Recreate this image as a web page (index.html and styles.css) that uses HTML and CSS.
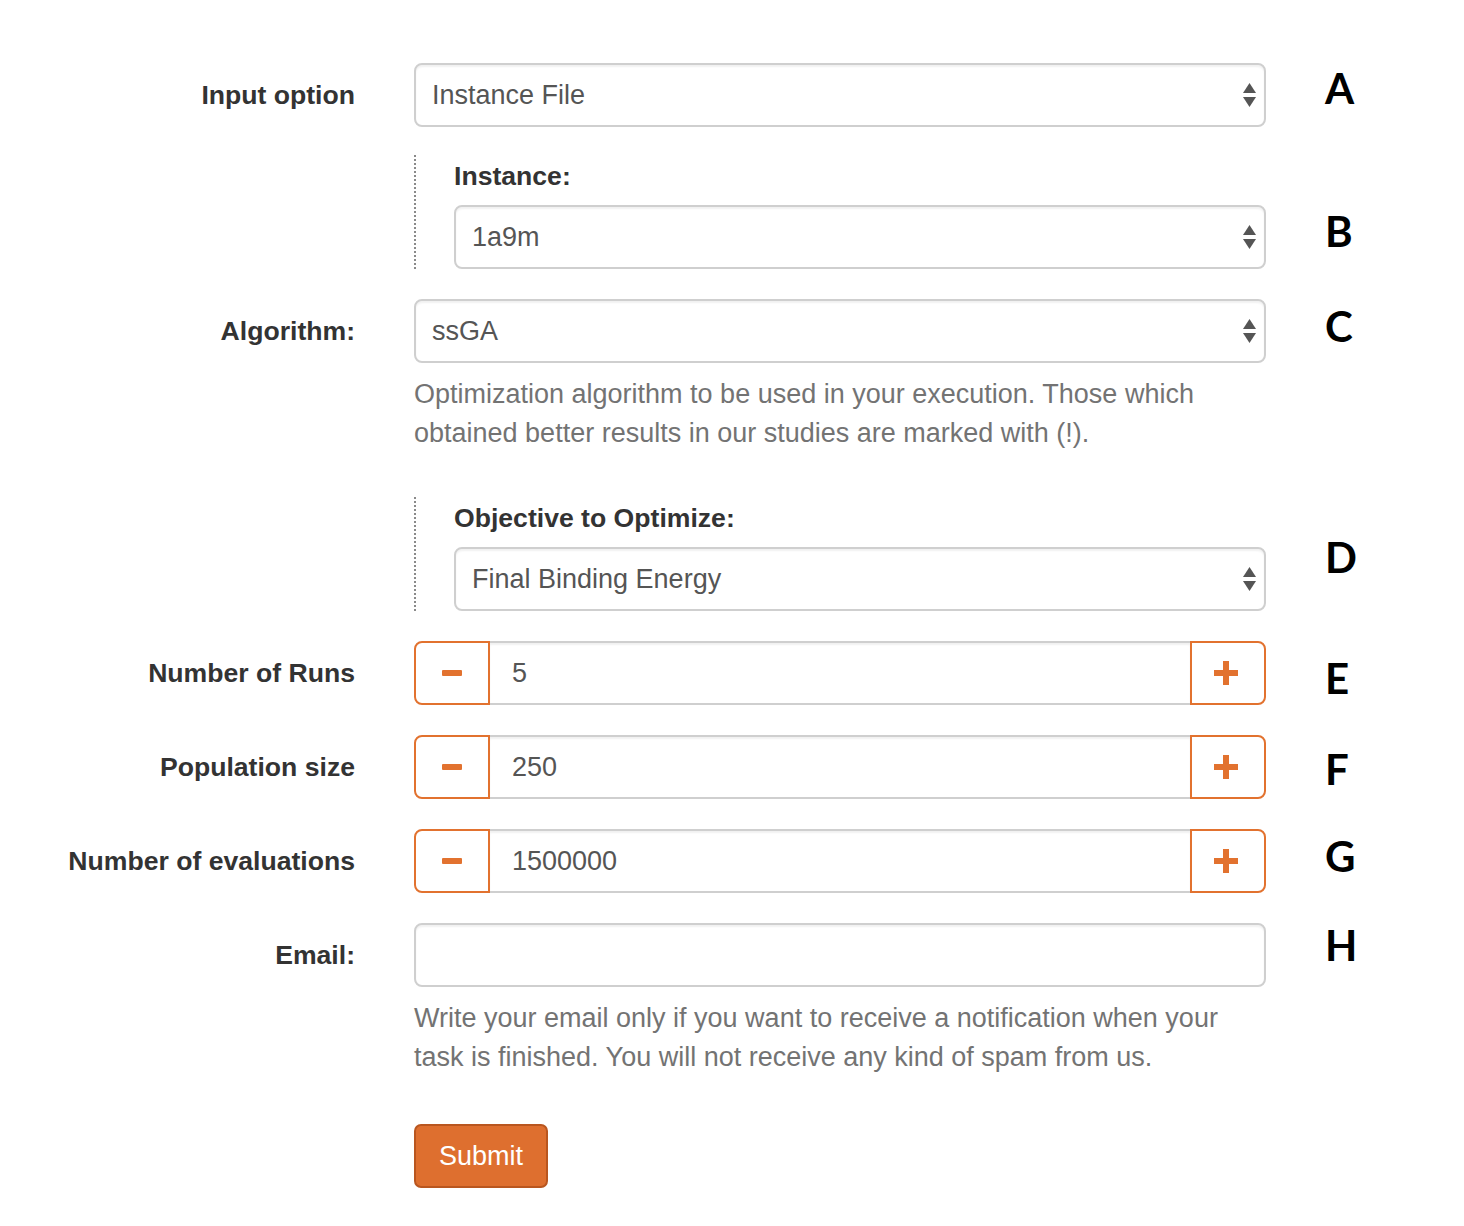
FILE: index.html
```html
<!DOCTYPE html>
<html lang="en">
<head>
<meta charset="utf-8">
<title>Execution form</title>
<link rel="stylesheet" href="styles.css">
</head>
<body>
<form class="form">
  <div class="group">
    <label class="label">Input option</label>
    <div class="control">
      <div class="select"><span>Instance File</span><svg class="caret" width="13" height="24" viewBox="0 0 13 24"><polygon points="6.5,0 13,10 0,10"/><polygon points="0,14 13,14 6.5,24"/></svg></div>
    </div>
    <div class="mark mark-a">A</div>
  </div>

  <div class="group group-sub">
    <div></div>
    <div class="sub">
      <div class="sub-label">Instance:</div>
      <div class="select"><span>1a9m</span><svg class="caret" width="13" height="24" viewBox="0 0 13 24"><polygon points="6.5,0 13,10 0,10"/><polygon points="0,14 13,14 6.5,24"/></svg></div>
    </div>
    <div class="mark mark-b">B</div>
  </div>

  <div class="group">
    <label class="label">Algorithm:</label>
    <div class="control">
      <div class="select"><span>ssGA</span><svg class="caret" width="13" height="24" viewBox="0 0 13 24"><polygon points="6.5,0 13,10 0,10"/><polygon points="0,14 13,14 6.5,24"/></svg></div>
      <p class="help">Optimization algorithm to be used in your execution. Those which obtained better results in our studies are marked with (!).</p>
    </div>
    <div class="mark mark-c">C</div>
  </div>

  <div class="group">
    <div></div>
    <div class="sub">
      <div class="sub-label">Objective to Optimize:</div>
      <div class="select"><span>Final Binding Energy</span><svg class="caret" width="13" height="24" viewBox="0 0 13 24"><polygon points="6.5,0 13,10 0,10"/><polygon points="0,14 13,14 6.5,24"/></svg></div>
    </div>
    <div class="mark mark-d">D</div>
  </div>

  <div class="group">
    <label class="label">Number of Runs</label>
    <div class="spinner">
      <button type="button" class="spin-btn spin-minus"><span class="minus"></span></button>
      <div class="spin-value">5</div>
      <button type="button" class="spin-btn spin-plus"><span class="plus"></span></button>
    </div>
    <div class="mark mark-e">E</div>
  </div>

  <div class="group">
    <label class="label">Population size</label>
    <div class="spinner">
      <button type="button" class="spin-btn spin-minus"><span class="minus"></span></button>
      <div class="spin-value">250</div>
      <button type="button" class="spin-btn spin-plus"><span class="plus"></span></button>
    </div>
    <div class="mark mark-f">F</div>
  </div>

  <div class="group">
    <label class="label">Number of evaluations</label>
    <div class="spinner">
      <button type="button" class="spin-btn spin-minus"><span class="minus"></span></button>
      <div class="spin-value">1500000</div>
      <button type="button" class="spin-btn spin-plus"><span class="plus"></span></button>
    </div>
    <div class="mark mark-g">G</div>
  </div>

  <div class="group">
    <label class="label">Email:</label>
    <div class="control">
      <div class="text-input"></div>
      <p class="help">Write your email only if you want to receive a notification when your task is finished. You will not receive any kind of spam from us.</p>
    </div>
    <div class="mark mark-h">H</div>
  </div>

  <div class="group group-submit">
    <div></div>
    <div class="control">
      <button type="button" class="submit">Submit</button>
    </div>
  </div>
</form>
</body>
</html>
```

FILE: styles.css
```css
html, body {
  margin: 0;
  padding: 0;
  background: #fff;
}

body {
  font-family: "Liberation Sans", Arial, Helvetica, sans-serif;
  font-size: 26.6px;
  color: #333;
}

.form {
  padding-top: 63px;
}

.group {
  display: grid;
  grid-template-columns: 355px 852px 1fr;
  column-gap: 59px;
  margin-bottom: 30px;
  align-items: start;
}

.group-sub {
  margin-top: -2px;
}

.label {
  text-align: right;
  font-weight: bold;
  line-height: 64px;
  color: #333;
}

.select,
.text-input {
  box-sizing: border-box;
  height: 64px;
  border: 2px solid #cfcfcf;
  border-radius: 8px;
  background: #fff;
  box-shadow: inset 0 2px 2px rgba(0, 0, 0, 0.06);
}

.select {
  display: flex;
  align-items: center;
  justify-content: space-between;
  padding: 0 8px 0 16px;
  color: #555;
  font-size: 27px;
}

.caret {
  fill: #555;
  flex: none;
}

.sub {
  border-left: 2px dotted #8a8a8a;
  padding-left: 38px;
}

.sub-label {
  font-weight: bold;
  line-height: 42px;
  margin-bottom: 8px;
  color: #333;
}

.help {
  margin: 12px 0 14px;
  color: #737373;
  font-size: 27px;
  line-height: 39px;
}

.spinner {
  display: flex;
  height: 64px;
}

.spin-btn {
  box-sizing: border-box;
  width: 76px;
  height: 64px;
  border: 2px solid #e2722f;
  background: #fff;
  padding: 0;
  display: flex;
  align-items: center;
  justify-content: center;
  flex: none;
}

.spin-minus {
  border-radius: 8px 0 0 8px;
}

.spin-plus {
  border-radius: 0 8px 8px 0;
  padding-right: 4px;
}

.minus {
  display: block;
  width: 20px;
  height: 6px;
  border-radius: 1px;
  background: #e2722f;
}

.plus {
  display: block;
  width: 24px;
  height: 24px;
  background:
    linear-gradient(#e2722f, #e2722f) center / 24px 6px no-repeat,
    linear-gradient(#e2722f, #e2722f) center / 6px 24px no-repeat;
}

.spin-value {
  flex: 1;
  box-sizing: border-box;
  border-top: 2px solid #cfcfcf;
  border-bottom: 2px solid #cfcfcf;
  box-shadow: inset 0 2px 2px rgba(0, 0, 0, 0.06);
  padding-left: 22px;
  line-height: 60px;
  color: #555;
  font-size: 27px;
}

.mark {
  font-family: Lato, "Open Sans", sans-serif;
  font-weight: 700;
  font-size: 42px;
  line-height: 64px;
  height: 64px;
  color: #000;
}

.mark-a { margin-top: -7px; margin-bottom: 7px; }
.mark-b { margin-top: 44px; margin-bottom: -44px; }
.mark-c { margin-top: -5px; margin-bottom: 5px; }
.mark-d { margin-top: 28px; margin-bottom: -28px; }
.mark-e { margin-top: 5px; margin-bottom: -5px; }
.mark-f { margin-top: 2px; margin-bottom: -2px; }
.mark-g { margin-top: -5px; margin-bottom: 5px; }
.mark-h { margin-top: -10px; margin-bottom: 10px; }

.group-submit {
  margin-top: 33px;
}

.submit {
  box-sizing: border-box;
  height: 64px;
  width: 134px;
  padding: 0;
  border: 2px solid #b9561f;
  border-radius: 7px;
  background: #de6f2f;
  color: #fff;
  font-family: "Liberation Sans", Arial, Helvetica, sans-serif;
  font-size: 27px;
}
```
